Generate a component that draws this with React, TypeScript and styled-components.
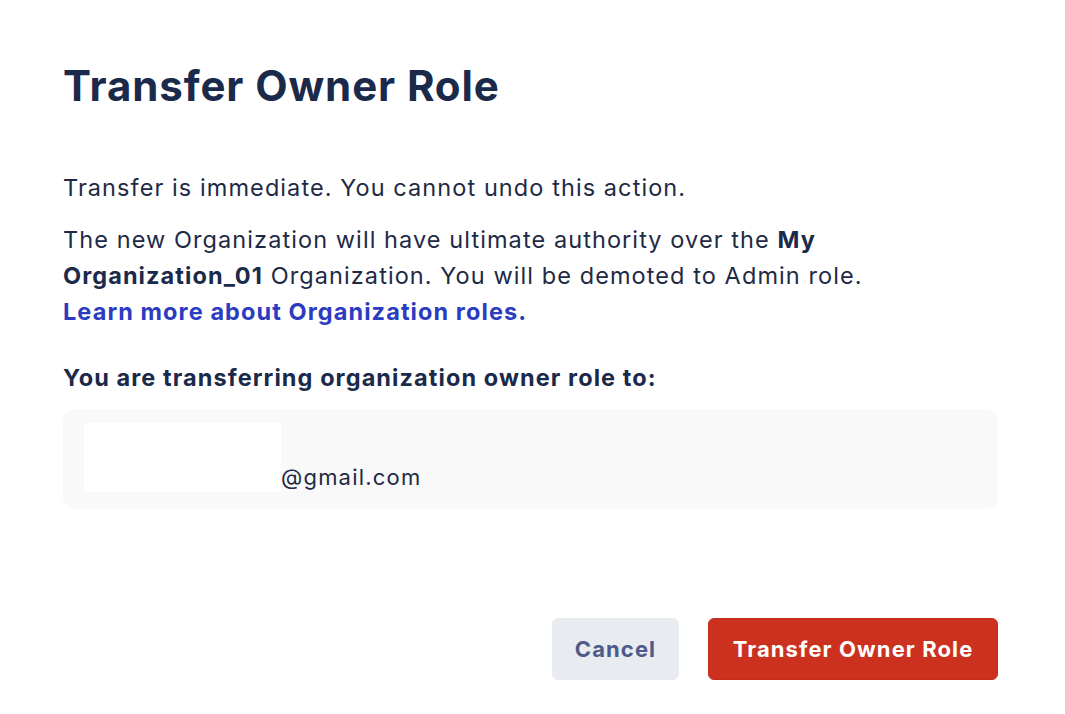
import React from "react";
import styled, { createGlobalStyle } from "styled-components";

const Global = createGlobalStyle`
  html, body { margin: 0; padding: 0; background: #ffffff; }
  body { font-family: Inter, "Noto Sans", "Liberation Sans", sans-serif; -webkit-font-smoothing: antialiased; }
`;

const Dialog = styled.div`
  width: 1065px;
  height: 714px;
  box-sizing: border-box;
  padding: 62px 67px 0 63px;
  display: flex;
  flex-direction: column;
  color: #1e2a45;
`;

const Title = styled.h1`
  margin: 0 0 60px;
  font-size: 42px;
  line-height: 48px;
  font-weight: 700;
  letter-spacing: 0.9px;
  color: #1b2a4a;
`;

const Para = styled.p<{ $gap?: number }>`
  margin: 0 0 ${(p) => p.$gap ?? 16}px;
  font-size: 23.5px;
  line-height: 36px;
  font-weight: 400;
  letter-spacing: 1.08px;
  color: #1e2a45;
`;

const Strong = styled.strong`
  font-weight: 700;
  color: #1b2a4a;
`;

const Link = styled.a`
  color: #2b3cc0;
  font-weight: 700;
  text-decoration: none;
`;

const Label = styled.div`
  font-size: 23.5px;
  line-height: 36px;
  font-weight: 700;
  letter-spacing: 1.08px;
  color: #1b2a4a;
  margin-bottom: 13px;
`;

const RecipientBox = styled.div`
  height: 100px;
  box-sizing: border-box;
  background: #f9f9f9;
  border-radius: 12px;
  padding: 14px 20px 17px 21px;
  display: flex;
  align-items: flex-end;
`;

const Redacted = styled.div`
  width: 197px;
  height: 69px;
  background: #ffffff;
`;

const Email = styled.span`
  font-size: 22px;
  line-height: 30px;
  letter-spacing: 1.2px;
  color: #1e2a45;
`;

const Actions = styled.div`
  margin-top: 109px;
  display: flex;
  justify-content: flex-end;
  gap: 29px;
`;

const Button = styled.button<{ $variant: "secondary" | "danger"; $w: number }>`
  width: ${(p) => p.$w}px;
  height: 62px;
  border-radius: 6px;
  font-family: inherit;
  font-size: 22px;
  font-weight: 700;
  letter-spacing: 1.1px;
  cursor: pointer;
  border: 1px solid ${(p) => (p.$variant === "danger" ? "#c12e1e" : "#e8ebef")};
  background: ${(p) => (p.$variant === "danger" ? "#cc3120" : "#e8ebef")};
  color: ${(p) => (p.$variant === "danger" ? "#ffffff" : "#4e5a8a")};
`;

export default function App() {
  return (
    <>
      <Global />
      <Dialog>
        <Title>Transfer Owner Role</Title>
        <Para>Transfer is immediate. You cannot undo this action.</Para>
        <Para $gap={30}>
          The new Organization will have ultimate authority over the <Strong>My</Strong>
          <br />
          <Strong>Organization_01</Strong> Organization. You will be demoted to Admin role.
          <br />
          <Link href="#">Learn more about Organization roles.</Link>
        </Para>
        <Label>You are transferring organization owner role to:</Label>
        <RecipientBox>
          <Redacted />
          <Email>@gmail.com</Email>
        </RecipientBox>
        <Actions>
          <Button $variant="secondary" $w={127}>Cancel</Button>
          <Button $variant="danger" $w={290}>Transfer Owner Role</Button>
        </Actions>
      </Dialog>
    </>
  );
}
